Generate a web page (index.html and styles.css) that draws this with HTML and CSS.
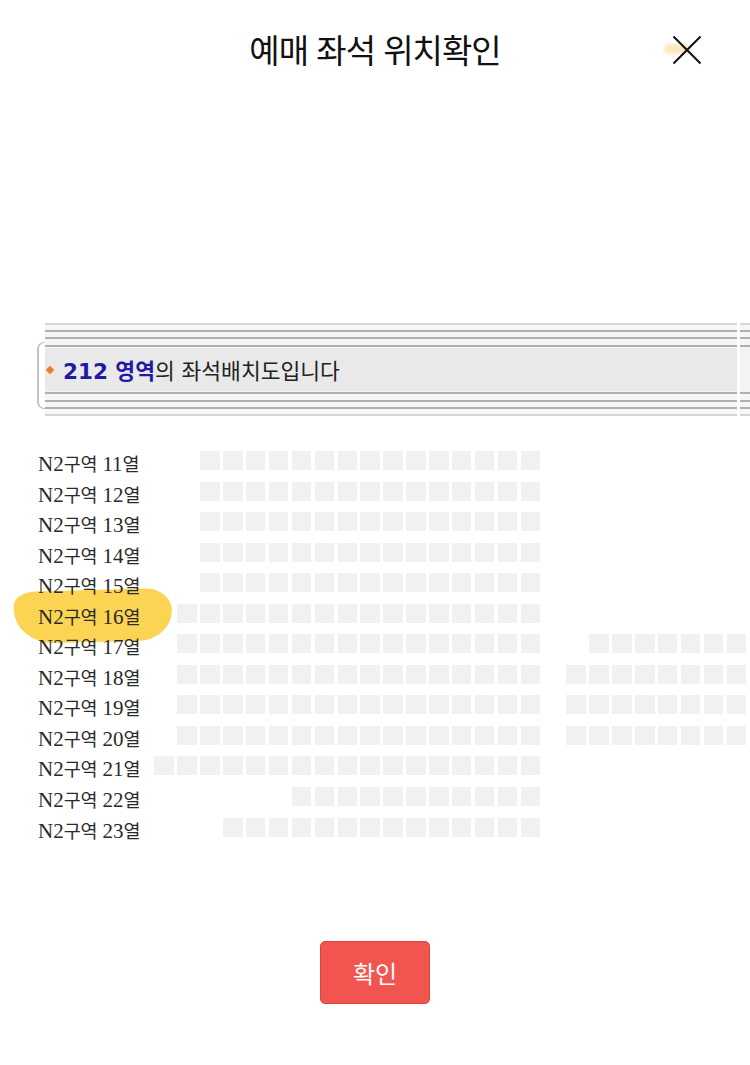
FILE: index.html
```html
<!DOCTYPE html>
<html lang="ko">
<head>
<meta charset="utf-8">
<title>예매 좌석 위치확인</title>
<link rel="stylesheet" href="styles.css">
</head>
<body>
<div class="page">
  <header class="header">
    <div></div>
    <h1 class="title">예매 좌석 위치확인</h1>
    <button class="close" aria-label="닫기">
      <span class="smudge"></span>
      <svg width="30" height="30" viewBox="0 0 30 30"><path d="M1.5 1.5 L28.5 28.5 M28.5 1.5 L1.5 28.5" stroke="#111" stroke-width="2" fill="none"/></svg>
    </button>
  </header>

  <div class="banner">
    <div class="bracket"></div>
    <div class="strip">
      <div class="lines top"></div>
      <div class="band"><span class="dot"></span><span class="hl">212 영역</span>의 좌석배치도입니다</div>
      <div class="lines bottom"></div>
    </div>
    <div class="strip tail">
      <div class="lines top"></div>
      <div class="band"></div>
      <div class="lines bottom"></div>
    </div>
  </div>

  <div class="seatmap">
    <div class="blob"></div>
    <div class="row"><span class="lbl">N2<span class="k">구역</span> 11<span class="k">열</span></span><div class="seats"><i class="o2"></i><i></i><i></i><i></i><i></i><i></i><i></i><i></i><i></i><i></i><i></i><i></i><i></i><i></i><i></i></div></div>
    <div class="row"><span class="lbl">N2<span class="k">구역</span> 12<span class="k">열</span></span><div class="seats"><i class="o2"></i><i></i><i></i><i></i><i></i><i></i><i></i><i></i><i></i><i></i><i></i><i></i><i></i><i></i><i></i></div></div>
    <div class="row"><span class="lbl">N2<span class="k">구역</span> 13<span class="k">열</span></span><div class="seats"><i class="o2"></i><i></i><i></i><i></i><i></i><i></i><i></i><i></i><i></i><i></i><i></i><i></i><i></i><i></i><i></i></div></div>
    <div class="row"><span class="lbl">N2<span class="k">구역</span> 14<span class="k">열</span></span><div class="seats"><i class="o2"></i><i></i><i></i><i></i><i></i><i></i><i></i><i></i><i></i><i></i><i></i><i></i><i></i><i></i><i></i></div></div>
    <div class="row"><span class="lbl">N2<span class="k">구역</span> 15<span class="k">열</span></span><div class="seats"><i class="o2"></i><i></i><i></i><i></i><i></i><i></i><i></i><i></i><i></i><i></i><i></i><i></i><i></i><i></i><i></i></div></div>
    <div class="row"><span class="lbl">N2<span class="k">구역</span> 16<span class="k">열</span></span><div class="seats"><i class="o1"></i><i></i><i></i><i></i><i></i><i></i><i></i><i></i><i></i><i></i><i></i><i></i><i></i><i></i><i></i><i></i></div></div>
    <div class="row"><span class="lbl">N2<span class="k">구역</span> 17<span class="k">열</span></span><div class="seats"><i class="o1"></i><i></i><i></i><i></i><i></i><i></i><i></i><i></i><i></i><i></i><i></i><i></i><i></i><i></i><i></i><i></i><i class="o19"></i><i></i><i></i><i></i><i></i><i></i><i></i></div></div>
    <div class="row"><span class="lbl">N2<span class="k">구역</span> 18<span class="k">열</span></span><div class="seats"><i class="o1"></i><i></i><i></i><i></i><i></i><i></i><i></i><i></i><i></i><i></i><i></i><i></i><i></i><i></i><i></i><i></i><i class="o18"></i><i></i><i></i><i></i><i></i><i></i><i></i><i></i></div></div>
    <div class="row"><span class="lbl">N2<span class="k">구역</span> 19<span class="k">열</span></span><div class="seats"><i class="o1"></i><i></i><i></i><i></i><i></i><i></i><i></i><i></i><i></i><i></i><i></i><i></i><i></i><i></i><i></i><i></i><i class="o18"></i><i></i><i></i><i></i><i></i><i></i><i></i><i></i></div></div>
    <div class="row"><span class="lbl">N2<span class="k">구역</span> 20<span class="k">열</span></span><div class="seats"><i class="o1"></i><i></i><i></i><i></i><i></i><i></i><i></i><i></i><i></i><i></i><i></i><i></i><i></i><i></i><i></i><i></i><i class="o18"></i><i></i><i></i><i></i><i></i><i></i><i></i><i></i></div></div>
    <div class="row"><span class="lbl">N2<span class="k">구역</span> 21<span class="k">열</span></span><div class="seats"><i></i><i></i><i></i><i></i><i></i><i></i><i></i><i></i><i></i><i></i><i></i><i></i><i></i><i></i><i></i><i></i><i></i></div></div>
    <div class="row"><span class="lbl">N2<span class="k">구역</span> 22<span class="k">열</span></span><div class="seats"><i class="o6"></i><i></i><i></i><i></i><i></i><i></i><i></i><i></i><i></i><i></i><i></i></div></div>
    <div class="row"><span class="lbl">N2<span class="k">구역</span> 23<span class="k">열</span></span><div class="seats"><i class="o3"></i><i></i><i></i><i></i><i></i><i></i><i></i><i></i><i></i><i></i><i></i><i></i><i></i><i></i></div></div>
  </div>

  <div class="actions">
    <button class="confirm">확인</button>
  </div>
</div>
</body>
</html>
```

FILE: styles.css
```css
* { box-sizing: border-box; }
html, body { margin: 0; padding: 0; background: #fff; }
body { font-family: "Noto Sans CJK KR", "Liberation Sans", sans-serif; color: #111; }
.page { width: 750px; height: 1065px; overflow: hidden; }

.header {
  height: 96px;
  display: grid;
  grid-template-columns: 1fr auto 1fr;
  align-items: center;
}
.title {
  margin: 0;
  padding-top: 2px;
  font-size: 33px;
  font-weight: 400;
  letter-spacing: -1px;
  color: #111;
  line-height: 40px;
}
.close {
  justify-self: end;
  margin-right: 48px;
  margin-top: 4px;
  width: 30px;
  height: 30px;
  padding: 0;
  border: 0;
  background: transparent;
  position: relative;
}
.close svg { display: block; position: relative; }
.smudge {
  position: absolute;
  left: -8px;
  top: 9px;
  width: 26px;
  height: 10px;
  border-radius: 6px;
  background: rgba(244, 205, 110, 0.45);
  filter: blur(1.5px);
}

.banner {
  margin-top: 226px;
  height: 96px;
  display: flex;
  padding-left: 37px;
}
.bracket {
  width: 8px;
  margin-top: 20px;
  height: 67px;
  border: 2px solid #c2c2c2;
  border-right: 0;
  border-top-width: 1px;
  border-bottom-width: 1px;
  border-radius: 7px 0 0 7px;
}
.strip { width: 692px; display: flex; flex-direction: column; }
.strip.tail { width: auto; flex: 1; margin-left: 3px; }
.lines.top {
  height: 26px;
  background: linear-gradient(to bottom,
    #fff 0, #fff 1px,
    #d6d6d6 1px, #d6d6d6 3px,
    #f6f6f6 3px, #f6f6f6 8px,
    #b0b0b0 8px, #b0b0b0 10px,
    #f6f6f6 10px, #f6f6f6 15px,
    #b0b0b0 15px, #b0b0b0 17px,
    #f6f6f6 17px, #f6f6f6 23px,
    #b0b0b0 23px, #b0b0b0 25px,
    #f4f4f4 25px, #f4f4f4 26px);
}
.lines.bottom {
  height: 27px;
  background: linear-gradient(to bottom,
    #f4f4f4 0, #f4f4f4 1px,
    #b0b0b0 1px, #b0b0b0 3px,
    #f6f6f6 3px, #f6f6f6 9px,
    #b0b0b0 9px, #b0b0b0 11px,
    #f6f6f6 11px, #f6f6f6 16px,
    #b0b0b0 16px, #b0b0b0 18px,
    #f6f6f6 18px, #f6f6f6 23px,
    #d6d6d6 23px, #d6d6d6 25px,
    #fff 25px, #fff 27px);
}
.band {
  height: 43px;
  background: #e9e9e9;
  display: flex;
  align-items: center;
  font-family: "DejaVu Sans", "Noto Sans CJK KR", sans-serif;
  font-size: 21.5px;
  color: #222;
  white-space: nowrap;
}
.tail .band { background: #f3f3f3; }
.dot {
  width: 6px;
  height: 6px;
  background: #f07a2c;
  transform: rotate(45deg);
  margin-left: 2px;
  margin-right: 10px;
}
.hl { color: #2219a6; font-weight: 700; }

.seatmap {
  position: relative;
  z-index: 0;
  margin-top: 33px;
  padding-left: 38px;
  display: flex;
  flex-direction: column;
  gap: 11.56px;
}
.blob {
  position: absolute;
  z-index: -1;
  left: 14px;
  top: 139px;
  width: 158px;
  height: 52px;
  background: rgba(249, 206, 58, 0.88);
  border-radius: 22px 26px 34px 40px / 14px 22px 30px 34px;
  transform: rotate(-1.5deg);
}
.row { display: flex; height: 19px; }
.lbl {
  width: 116.4px;
  flex: none;
  font-family: "Liberation Serif", "Noto Sans CJK KR", serif;
  font-size: 21px;
  line-height: 19px;
  padding-top: 3px;
  color: #2a2a2a;
  white-space: nowrap;
}
.lbl .k {
  font-family: "Noto Sans CJK KR", sans-serif;
  font-size: 18.5px;
  letter-spacing: -0.3px;
}
.seats {
  display: grid;
  grid-template-columns: repeat(26, 19.5px);
  column-gap: 3.4px;
}
.seats i { display: block; height: 19px; background: #f1f1f1; }
.seats .o1 { grid-column-start: 2; }
.seats .o2 { grid-column-start: 3; }
.seats .o3 { grid-column-start: 4; }
.seats .o6 { grid-column-start: 7; }
.seats .o18 { grid-column-start: 19; }
.seats .o19 { grid-column-start: 20; }

.actions { display: flex; justify-content: center; margin-top: 104px; }
.confirm {
  width: 110px;
  height: 63px;
  border: 1px solid #d94640;
  border-radius: 5px;
  background: #f2554f;
  color: #fff;
  font-family: "Noto Sans CJK KR", sans-serif;
  font-size: 24px;
  padding: 0;
}
```
